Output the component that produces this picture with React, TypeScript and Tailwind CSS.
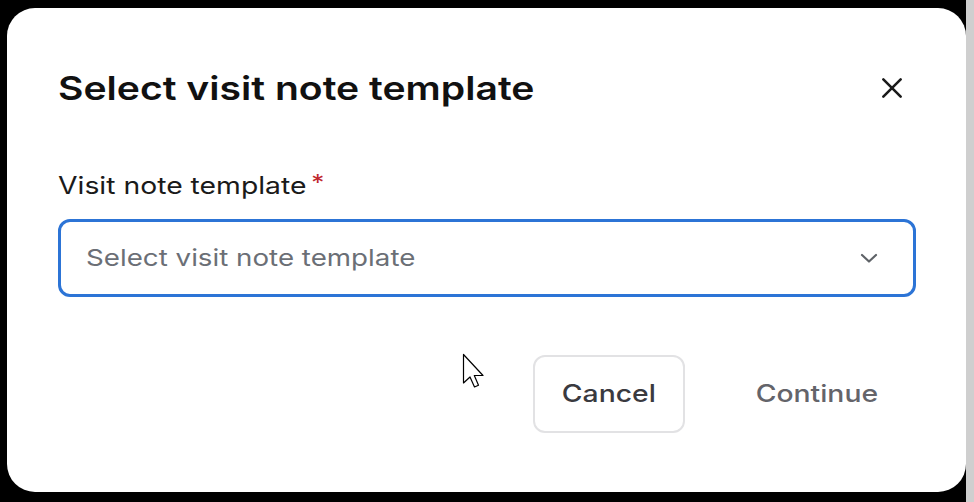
import React from "react";

export default function App() {
  return (
    <div className="w-[974px] h-[502px] bg-black flex overflow-hidden relative" style={{ fontFamily: "Inter, 'Liberation Sans', sans-serif" }}>
      <div className="ml-[7px] mt-[8px] w-[959px] h-[484px] bg-white rounded-[28px] pl-[51px] pr-[50px] pt-[56px] flex flex-col">
        <div className="flex items-center justify-between h-[48px]">
          <h1 className="text-[33px] leading-[48px] font-semibold text-[#111111] origin-left scale-x-[1.185]">Select visit note template</h1>
          <button className="w-[30px] h-[30px] mr-[9px] flex items-center justify-center text-[#1a1a1a]">
            <svg width="26" height="26" viewBox="0 0 24 24" fill="none" stroke="currentColor" strokeWidth="2.4" strokeLinecap="round">
              <path d="M4 4 L20 20 M20 4 L4 20" />
            </svg>
          </button>
        </div>
        <div className="mt-[58px] h-[32px] flex items-center text-[24px] text-[#1a1a1a] origin-left scale-x-[1.18]">
          <span>Visit note template</span>
          <span className="ml-[4px] text-[#c0262d] text-[22px] -mt-[8px]">*</span>
        </div>
        <div className="mt-[17px] h-[78px] rounded-[12px] border-[3px] border-[#2c74d6] flex items-center justify-between pl-[25px] pr-[32px]">
          <span className="text-[23.5px] text-[#6b6f76] origin-left scale-x-[1.18]">Select visit note template</span>
          <svg width="24" height="24" viewBox="0 0 24 24" fill="none" stroke="#5f6368" strokeWidth="2.2" strokeLinecap="round" strokeLinejoin="round">
            <path d="M5 9 L12 15.5 L19 9" />
          </svg>
        </div>
        <div className="mt-[58px] flex justify-end items-center gap-[52px] pr-[19px]">
          <button className="w-[152px] h-[78px] rounded-[12px] border-[2px] border-[#e2e2e4] text-[24px] font-medium text-[#3a3a3f]">
            <span className="inline-block scale-x-[1.18]">Cancel</span>
          </button>
          <button className="w-[160px] h-[78px] rounded-[12px] text-[24px] font-medium text-[#64646a]">
            <span className="inline-block scale-x-[1.18]">Continue</span>
          </button>
        </div>
      </div>
      <div className="w-[8px] h-full bg-[#cfcfcf]" />
      <svg className="absolute left-[462px] top-[353px]" width="28" height="40" viewBox="0 0 28 40">
        <path d="M1.5 1.5 L1.5 30 L8 24 L12.5 34 L16.5 32.3 L12.3 22.5 L21 22.5 Z" fill="white" stroke="black" strokeWidth="1.2" strokeLinejoin="round" />
      </svg>
    </div>
  );
}
